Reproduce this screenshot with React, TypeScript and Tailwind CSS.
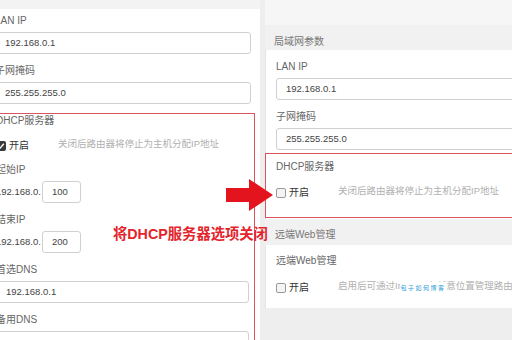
import React from "react";

const font = { fontFamily: '"Liberation Sans", "Noto Sans CJK SC", sans-serif' };

function Label({ children }: { children: React.ReactNode }) {
  return <div className="h-[14px] text-[10px] leading-[14px] text-[#666]">{children}</div>;
}

function Input({ value, className = "" }: { value: string; className?: string }) {
  return (
    <div
      className={`mt-[4px] flex h-[22px] items-center rounded-[3px] border border-[#d0d0d0] bg-white pl-[9px] text-[9.5px] text-[#444] ${className}`}
    >
      {value}
    </div>
  );
}

function Field({ label, value }: { label: string; value: string }) {
  return (
    <div className="mb-[10px]">
      <Label>{label}</Label>
      <Input value={value} />
    </div>
  );
}

function IpField({ label, value }: { label: string; value: string }) {
  return (
    <div className="mb-[10px]">
      <Label>{label}</Label>
      <div className="mt-[4px] flex items-center">
        <span className="w-[46px] text-[9.5px] text-[#444]">192.168.0.</span>
        <div className="flex h-[22px] w-[39px] items-center rounded-[3px] border border-[#d0d0d0] pl-[9px] text-[9.5px] text-[#444]">
          {value}
        </div>
      </div>
    </div>
  );
}

function Toggle({ checked, hint }: { checked: boolean; hint: string }) {
  return (
    <div className="flex h-[14px] items-start">
      <div className="flex w-[62px] items-center gap-[3px] pt-[2px]">
        {checked ? (
          <span className="flex h-[10px] w-[10px] items-center justify-center rounded-[2px] bg-[#3a3a3a]">
            <svg width="8" height="8" viewBox="0 0 8 8">
              <path d="M1.2 4.2 L3.2 6 L6.8 1.8" stroke="#fff" strokeWidth="1.4" fill="none" />
            </svg>
          </span>
        ) : (
          <span className="h-[10px] w-[10px] rounded-[2px] border border-[#9a9a9a] bg-[#f4f4f4]" />
        )}
        <span className="text-[10px] leading-[12px] text-[#333]">开启</span>
      </div>
      <span className="whitespace-nowrap text-[9.5px] leading-[12px] text-[#b0b0b0]">{hint}</span>
    </div>
  );
}

export default function App() {
  return (
    <div className="relative flex h-[340px] w-[512px] overflow-hidden bg-[#eeeeee]" style={font}>
      {/* left panel */}
      <div className="flex w-[260px] flex-none flex-col">
        <div className="h-[9px] bg-[#f3f3f3]" />
        <div className="flex-1 overflow-hidden bg-white">
          <div className="-ml-[5px] pr-[9px] pt-[5px]">
            <Field label="LAN IP" value="192.168.0.1" />
            <Field label="子网掩码" value="255.255.255.0" />
            <div className="-ml-[10px] -mr-[4px] mt-[-1px] border border-[#d9545c] pb-[10px] pl-[10px] pr-[4px]">
              <Label>DHCP服务器</Label>
              <div className="mt-[10px] mb-[11px]">
                <Toggle checked hint="关闭后路由器将停止为主机分配IP地址" />
              </div>
              <IpField label="起始IP" value="100" />
              <IpField label="结束IP" value="200" />
              <div className="pr-[1px]">
                <Field label="首选DNS" value="192.168.0.1" />
                <Field label="备用DNS" value="" />
              </div>
            </div>
          </div>
        </div>
      </div>

      {/* right panel */}
      <div className="ml-[5px] flex-1 overflow-hidden">
        <div className="flex w-[320px] flex-col">
          <div className="h-[25px] bg-[#f6f6f6]" />
          <div className="flex h-[25px] items-center bg-[#f1f1f1] pl-[9px] pt-[7px] text-[10px] text-[#777]">
            局域网参数
          </div>
          <div className="border-l border-[#e4e4e4] bg-white pl-[10px] pt-[10px]">
            <Field label="LAN IP" value="192.168.0.1" />
            <Label>子网掩码</Label>
            <Input value="255.255.255.0" />
            <div className="-ml-[11px] mt-[3px] mb-[1px] h-[65px] border border-[#d9545c] pl-[10px] pt-[6px]">
              <Label>DHCP服务器</Label>
              <div className="mt-[11px]">
                <Toggle checked={false} hint="关闭后路由器将停止为主机分配IP地址" />
              </div>
            </div>
          </div>
          <div className="flex h-[26px] items-center bg-[#f1f1f1] pl-[10px] pt-[4px] text-[10px] text-[#777]">
            远端Web管理
          </div>
          <div className="h-[63px] border-l border-[#e4e4e4] bg-white pl-[10px] pt-[9px]">
            <Label>远端Web管理</Label>
            <div className="mt-[12px]">
              <Toggle checked={false} hint="启用后可通过Internet在任意位置管理路由器" />
            </div>
          </div>
        </div>
      </div>

      {/* annotations */}
      <svg className="absolute left-[226px] top-[179px]" width="48" height="32" viewBox="0 0 48 32">
        <polygon points="0,9 23,9 23,0 47,16 23,32 23,23 0,23" fill="#e3141d" />
      </svg>
      <div className="absolute left-[113px] top-[226px] whitespace-nowrap text-[14.3px] font-bold leading-[17px] text-[#e3242b]">
        将DHCP服务器选项关闭
      </div>
      <div className="absolute left-[400px] top-[282px] flex h-[13px] w-[46px] items-center justify-center bg-white text-[6px] tracking-[1.5px] text-[#1f9ad6]">
        包子如何博客
      </div>
    </div>
  );
}
